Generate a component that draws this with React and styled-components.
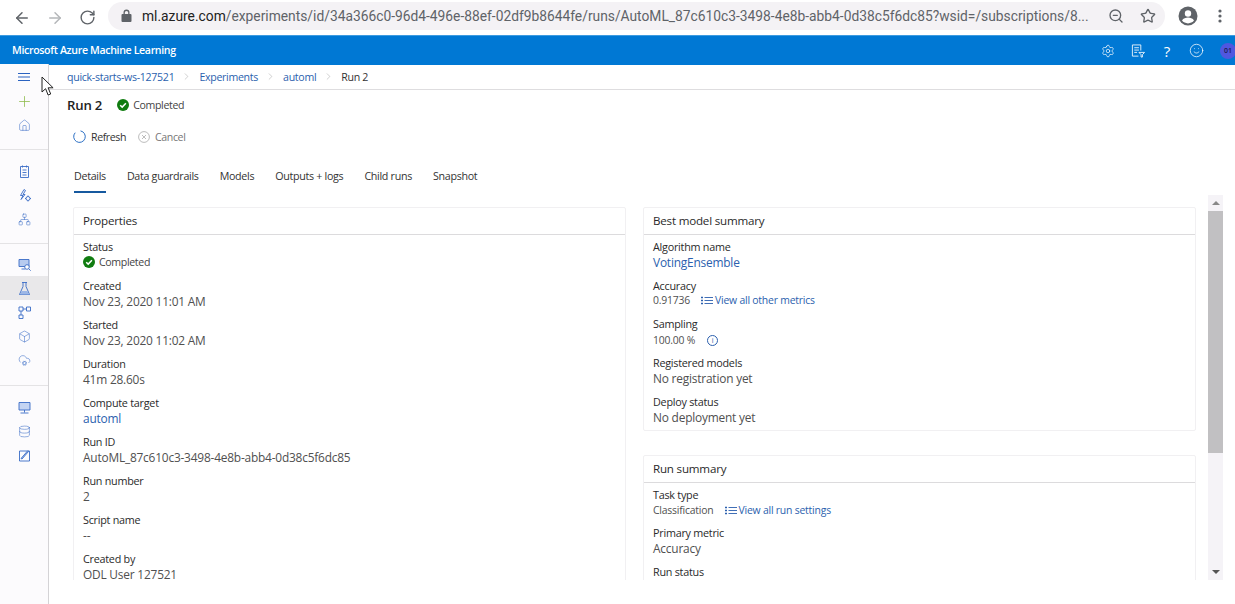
import React from 'react';
import styled, { createGlobalStyle } from 'styled-components';
import {
  ArrowLeft, ArrowRight, RotateCw, Star, Settings, Smile, Home, Network, Box, CloudCog, Database,
  Plus, ChevronRight, ZoomOut,
} from 'lucide-react';

const GlobalStyle = createGlobalStyle`
  html, body {
    margin: 0;
    height: 100%;
    overflow: hidden;
    background: #fff;
  }
  body {
    font-family: "Open Sans", "Noto Sans", "Liberation Sans", sans-serif;
    color: #222;
  }
`;

const Page = styled.div`
  position: relative;
  width: 1235px;
  height: 604px;
  display: flex;
  flex-direction: column;
  overflow: hidden;
`;

const BrowserBar = styled.div`
  height: 35px;
  display: flex;
  align-items: center;
  background: #fff;
  flex: none;
`;

const NavButtons = styled.div`
  display: flex;
  align-items: center;
  gap: 15px;
  padding-left: 13px;
  width: 108px;
  box-sizing: border-box;
  flex: none;
  color: #5f6368;
`;

const Omnibox = styled.div`
  width: 1057px;
  height: 28px;
  margin-top: -3px;
  border-radius: 14px;
  background: #f4f2f5;
  display: flex;
  align-items: center;
  padding: 0 9px 0 13px;
  box-sizing: border-box;
  font-family: "Roboto", sans-serif;
  font-size: 13.8px;
  color: #5f6368;
  white-space: nowrap;
  flex: none;
  strong {
    font-weight: 400;
    color: #222;
  }
  svg {
    flex: none;
  }
`;

const UrlText = styled.span`
  margin-left: 10px;
  flex: 1;
  min-width: 0;
  overflow: hidden;
`;

const OmniIcons = styled.div`
  display: flex;
  align-items: center;
  gap: 16px;
  flex: none;
  color: #5f6368;
`;

const BrowserRight = styled.div`
  display: flex;
  align-items: center;
  color: #5f6368;
  margin-left: 13px;
  gap: 20px;
  margin-top: -3px;
`;

const AzureBar = styled.header`
  height: 30px;
  flex: none;
  background: #0078d4;
  display: flex;
  align-items: center;
  justify-content: space-between;
  color: #fff;
  border-top: 1px solid #3d9be0;
  box-sizing: border-box;
`;

const Brand = styled.div`
  font-size: 10.6px;
  font-weight: 600;
  padding: 0 0 2px 12px;
  letter-spacing: -0.35px;
`;

const AzureIcons = styled.div`
  display: flex;
  align-items: center;
  gap: 16px;
  margin-right: -1px;
`;

const HelpMark = styled.span`
  width: 12px;
  text-align: center;
  font-size: 15px;
  line-height: 16px;
`;

const Avatar = styled.div`
  width: 16px;
  height: 16px;
  border-radius: 50%;
  background: #4f57e0;
  color: #1b1b50;
  font-size: 7px;
  font-weight: 600;
  display: flex;
  align-items: center;
  padding-left: 4px;
  box-sizing: border-box;
`;

const Body = styled.div`
  flex: 1;
  display: flex;
  min-height: 0;
`;

const Sidebar = styled.nav`
  width: 49px;
  flex: none;
  box-sizing: border-box;
  background: #fcfbfd;
  border-right: 1px solid #d4d3d6;
  margin-top: -1px;
`;

const NavGroup = styled.div`
  padding: ${(p) => p.$top}px 0 ${(p) => p.$bottom}px;
  border-bottom: ${(p) => (p.$last ? 'none' : '1px solid #e4e3e5')};
`;

const NavItem = styled.div`
  height: 24px;
  display: flex;
  align-items: center;
  justify-content: center;
  color: ${(p) => p.$color || '#3a6cc6'};
  background: ${(p) => (p.$active ? '#e9e8ea' : 'transparent')};
`;

const Main = styled.main`
  flex: 1;
  min-width: 0;
  display: flex;
  flex-direction: column;
`;

const Breadcrumbs = styled.div`
  height: 25px;
  box-sizing: border-box;
  flex: none;
  border-bottom: 1px solid #dedddf;
  display: flex;
  align-items: center;
  padding: 0 0 1px 18px;
  font-size: 10.6px;
  letter-spacing: -0.3px;
  color: #333;
`;

const Crumb = styled.span`
  color: #2b5fae;
`;

const CrumbSep = styled.span`
  display: flex;
  color: #999;
  margin: 0 7px;
`;

const TitleRow = styled.div`
  height: 32px;
  flex: none;
  display: flex;
  align-items: center;
  padding: 0 0 2px 18px;
  box-sizing: border-box;
`;

const Title = styled.h1`
  margin: 0 15px 0 0;
  font-size: 13.2px;
  font-weight: 600;
  color: #222;
  letter-spacing: -0.2px;
`;

const StatusText = styled.div`
  display: flex;
  align-items: center;
  gap: 4px;
  margin-top: ${(p) => p.$drop || 0}px;
  font-size: 10.6px;
  letter-spacing: -0.35px;
  color: #444;
`;

const CommandBar = styled.div`
  height: 30px;
  flex: none;
  display: flex;
  align-items: center;
  padding: 0 0 1px 24px;
  box-sizing: border-box;
  font-size: 10.6px;
  letter-spacing: -0.4px;
`;

const Command = styled.div`
  display: flex;
  align-items: center;
  gap: 5px;
  margin-right: 12px;
  color: ${(p) => (p.$disabled ? '#777' : '#333')};
`;

const Tabs = styled.div`
  height: 36px;
  margin-top: 5px;
  flex: none;
  display: flex;
  gap: 21px;
  padding-left: 25px;
  font-size: 10.7px;
  letter-spacing: -0.3px;
`;

const Tab = styled.div`
  height: 100%;
  box-sizing: border-box;
  padding-top: 12px;
  color: #333;
  border-bottom: 2px solid ${(p) => (p.$active ? '#16599f' : 'transparent')};
`;

const ContentRow = styled.div`
  display: flex;
  height: 385px;
  margin-top: 2px;
  flex: none;
`;

const Columns = styled.div`
  width: 1159px;
  flex: none;
  overflow: hidden;
  padding: 12px 0 0 24px;
  box-sizing: border-box;
  display: grid;
  grid-template-columns: 553px 553px;
  column-gap: 17px;
  align-items: start;
`;

const Column = styled.div`
  display: flex;
  flex-direction: column;
  gap: 24px;
`;

const Card = styled.section`
  border: 1px solid #f1f0f2;
  border-radius: 2px;
  padding-bottom: 1px;
`;

const CardTitle = styled.h2`
  margin: 0;
  height: 27px;
  box-sizing: border-box;
  border-bottom: 1px solid #dcdbdd;
  padding: 5px 0 0 9px;
  font-size: 11.6px;
  font-weight: 500;
  letter-spacing: -0.2px;
  color: #2a2a2a;
`;

const Field = styled.div`
  height: ${(p) => (p.$compact ? 38 : 39)}px;
  box-sizing: border-box;
  padding: 4px 0 0 9px;
`;

const Label = styled.div`
  font-size: 10.8px;
  line-height: 15px;
  letter-spacing: -0.25px;
  color: #2a2a2a;
`;

const Value = styled.div`
  font-size: 11.9px;
  line-height: 16px;
  letter-spacing: -0.2px;
  color: ${(p) => (p.$link ? '#2b5fae' : '#505050')};
`;

const SmallValue = styled.div`
  display: flex;
  align-items: center;
  margin-top: ${(p) => p.$drop || 0}px;
  font-size: 10.4px;
  line-height: 15px;
  letter-spacing: -0.2px;
  color: #505050;
`;

const MetricLink = styled.span`
  display: inline-flex;
  align-items: center;
  gap: 2px;
  margin-left: 11px;
  color: #2b5fae;
`;

const InfoDot = styled.span`
  width: 9px;
  height: 9px;
  margin-left: 12px;
  border: 1px solid #2b5fae;
  border-radius: 50%;
  color: #2b5fae;
  font-size: 7px;
  line-height: 9px;
  text-align: center;
`;

const Scrollbar = styled.div`
  width: 15px;
  flex: none;
  background: #f5f3f7;
  display: flex;
  flex-direction: column;
  align-items: center;
`;

const ScrollArrow = styled.div`
  height: 16px;
  flex: none;
  display: flex;
  align-items: center;
  justify-content: center;
  &::before {
    content: '';
    border-left: 4px solid transparent;
    border-right: 4px solid transparent;
    ${(p) => (p.$down ? 'border-top: 4px solid #555;' : 'border-bottom: 4px solid #888;')}
  }
`;

const ScrollThumb = styled.div`
  width: 100%;
  height: 242px;
  flex: none;
  background: #c1c0c2;
`;

const ScrollSpace = styled.div`
  flex: 1;
`;

const Pointer = styled.svg`
  position: absolute;
  left: 41px;
  top: 76px;
`;

const CheckBadge = ({ size = 12 }) => (
  <svg width={size} height={size} viewBox="0 0 12 12">
    <circle cx="6" cy="6" r="6" fill="#107c10" />
    <path d="M3.2 6.2 5.2 8.1 8.9 4.2" fill="none" stroke="#fff" strokeWidth="1.5" />
  </svg>
);

const ListGlyph = () => (
  <svg width="12" height="9" viewBox="0 0 12 9" fill="none" stroke="#2b5fae">
    <path d="M0 1.5h2M0 4.5h2M0 7.5h2" strokeWidth="1.4" />
    <path d="M3.5 1.5H12M3.5 4.5H12M3.5 7.5H12" strokeWidth="0.9" />
  </svg>
);

const LockIcon = () => (
  <svg width="11" height="14" viewBox="0 0 11 14">
    <path d="M2.5 5V3.6a3 3 0 0 1 6 0V5h1a1 1 0 0 1 1 1v6a1 1 0 0 1-1 1h-8a1 1 0 0 1-1-1V6a1 1 0 0 1 1-1zM3.8 5h3.4V3.6a1.7 1.7 0 0 0-3.4 0z" fill="#5f6368" />
  </svg>
);

const AccountIcon = () => (
  <svg width="20" height="20" viewBox="0 0 20 20">
    <circle cx="10" cy="10" r="9.5" fill="#5f6368" />
    <circle cx="10" cy="7.5" r="3.2" fill="#fff" />
    <path d="M4 14.4c1.2-2 3.8-2.8 6-2.8s4.8.8 6 2.8A7.5 7.5 0 0 1 4 14.4z" fill="#fff" />
  </svg>
);

const KebabIcon = () => (
  <svg width="4" height="14" viewBox="0 0 4 14" fill="#5f6368">
    <circle cx="2" cy="2" r="1.6" />
    <circle cx="2" cy="7" r="1.6" />
    <circle cx="2" cy="12" r="1.6" />
  </svg>
);

// small line icons of the side rail, drawn on a 13px grid
const RailIcon = ({ children }) => (
  <svg width="13" height="13" viewBox="0 0 13 13" fill="none" stroke="currentColor" strokeWidth="0.9">
    {children}
  </svg>
);

const HamburgerIcon = () => (
  <svg width="12" height="8" viewBox="0 0 12 8" fill="none" stroke="#2a62c0" strokeWidth="1">
    <path d="M0 .5h12M0 4h12M0 7.500h12" />
  </svg>
);

const NotesIcon = () => (
  <RailIcon>
    <path d="M2.5 1.500h8v11h-8zM4.500.5v2M8.500.5v2M4.500 5h4M4.500 7.500h4M4.500 10h4" />
  </RailIcon>
);

const AutomlIcon = () => (
  <RailIcon>
    <path d="M6 .5 2.500 6.500h2.500l-2 4 4-5H5l2.500-4z" />
    <circle cx="10" cy="9.500" r="2" />
    <path d="M10 6.500v1M10 11.500v1M7 9.500h1M12 9.500h1" />
  </RailIcon>
);

const ComputeSearchIcon = () => (
  <RailIcon>
    <path d="M1 1.500h10v7H1zM3.500 11h4" fill="#b7cbef" />
    <circle cx="9" cy="9" r="2.300" fill="#fff" />
    <path d="m10.700 10.700 2 2" />
  </RailIcon>
);

const FlaskIcon = () => (
  <RailIcon>
    <path d="M4 .5h5M5 .5v4L1.500 12.500h10L8 4.500v-4" />
    <path d="M3.500 9h6l1.500 3.500H2z" fill="#9db7e6" stroke="none" />
  </RailIcon>
);

const PipelineIcon = () => (
  <RailIcon>
    <path d="M1 1h4v4H1zM8.500 1h4v4h-4zM1 9h4v3.500H1zM5 3h3.500M3 5v4" />
  </RailIcon>
);

const ScreenIcon = () => (
  <RailIcon>
    <path d="M1 1.500h11v7.500H1z" fill="#c4d4f2" />
    <path d="M6.500 9v2.500M2.500 12h8" />
  </RailIcon>
);

const SlashNoteIcon = () => (
  <RailIcon>
    <path d="M1.500 2h10v10h-10z" />
    <path d="M4 10l6.500-7.500v-.5h-1L3 9.500z" fill="#b7cbef" />
  </RailIcon>
);

const FeedbackListIcon = () => (
  <svg width="14" height="14" viewBox="0 0 15 14" fill="none" stroke="currentColor" strokeWidth="0.9">
    <path d="M8 12.500H1.500v-12h9v6M3.500 3.500h5M3.500 6h5M3.500 8.500h3" />
    <path d="M8.500 8.500h6l-2.300 2.500v2.500h-1.400V11z" />
  </svg>
);

const railIcon = { size: 13, strokeWidth: 1 };

const navGroups = [
  { id: 'top', top: 1, bottom: 12, items: [
    { key: 'menu', icon: <HamburgerIcon /> },
    { key: 'new', icon: <Plus size={17} strokeWidth={1.1} />, color: '#8dbb4a' },
    { key: 'home', icon: <Home {...railIcon} /> },
  ] },
  { id: 'author', top: 9, bottom: 12, items: [
    { key: 'notes', icon: <NotesIcon /> },
    { key: 'automl', icon: <AutomlIcon /> },
    { key: 'designer', icon: <Network {...railIcon} /> },
  ] },
  { id: 'assets', top: 8, bottom: 13, items: [
    { key: 'datasets', icon: <ComputeSearchIcon /> },
    { key: 'experiments', icon: <FlaskIcon />, active: true },
    { key: 'pipelines', icon: <PipelineIcon /> },
    { key: 'models', icon: <Box {...railIcon} /> },
    { key: 'endpoints', icon: <CloudCog {...railIcon} /> },
  ] },
  { id: 'manage', top: 9, bottom: 0, last: true, items: [
    { key: 'compute', icon: <ScreenIcon /> },
    { key: 'datastores', icon: <Database {...railIcon} /> },
    { key: 'labeling', icon: <SlashNoteIcon /> },
  ] },
];

const properties = [
  { label: 'Created', value: 'Nov 23, 2020 11:01 AM' },
  { label: 'Started', value: 'Nov 23, 2020 11:02 AM' },
  { label: 'Duration', value: '41m 28.60s' },
  { label: 'Compute target', value: 'automl', link: true },
  { label: 'Run ID', value: 'AutoML_87c610c3-3498-4e8b-abb4-0d38c5f6dc85' },
  { label: 'Run number', value: '2' },
  { label: 'Script name', value: '--' },
  { label: 'Created by', value: 'ODL User 127521' },
];

const tabs = ['Details', 'Data guardrails', 'Models', 'Outputs + logs', 'Child runs', 'Snapshot'];

export default function App() {
  return (
    <Page>
      <GlobalStyle />
      <BrowserBar>
        <NavButtons>
          <ArrowLeft size={18} strokeWidth={2} />
          <ArrowRight size={18} strokeWidth={2} color="#b4b6b9" />
          <RotateCw size={17} strokeWidth={2} />
        </NavButtons>
        <Omnibox>
          <LockIcon />
          <UrlText>
            <strong>ml.azure.com</strong>/experiments/id/34a366c0-96d4-496e-88ef-02df9b8644fe/runs/AutoML_87c610c3-3498-4e8b-abb4-0d38c5f6dc85?wsid=/subscriptions/8...
          </UrlText>
          <OmniIcons>
            <ZoomOut size={16} strokeWidth={2} />
            <Star size={16} strokeWidth={2} />
          </OmniIcons>
        </Omnibox>
        <BrowserRight>
          <AccountIcon />
          <KebabIcon />
        </BrowserRight>
      </BrowserBar>

      <AzureBar>
        <Brand>Microsoft Azure Machine Learning</Brand>
        <AzureIcons>
          <Settings size={14} strokeWidth={1.2} />
          <FeedbackListIcon />
          <HelpMark>?</HelpMark>
          <Smile size={15} strokeWidth={1.2} />
          <Avatar>01</Avatar>
        </AzureIcons>
      </AzureBar>

      <Body>
        <Sidebar>
          {navGroups.map((group) => (
            <NavGroup key={group.id} $top={group.top} $bottom={group.bottom} $last={group.last}>
              {group.items.map((item) => (
                <NavItem key={item.key} $color={item.color} $active={item.active}>{item.icon}</NavItem>
              ))}
            </NavGroup>
          ))}
        </Sidebar>

        <Main>
          <Breadcrumbs>
            <Crumb>quick-starts-ws-127521</Crumb>
            <CrumbSep><ChevronRight size={11} strokeWidth={1} /></CrumbSep>
            <Crumb>Experiments</Crumb>
            <CrumbSep><ChevronRight size={11} strokeWidth={1} /></CrumbSep>
            <Crumb>automl</Crumb>
            <CrumbSep><ChevronRight size={11} strokeWidth={1} /></CrumbSep>
            <span>Run 2</span>
          </Breadcrumbs>

          <TitleRow>
            <Title>Run 2</Title>
            <StatusText><CheckBadge />Completed</StatusText>
          </TitleRow>

          <CommandBar>
            <Command>
              <svg width="13" height="13" viewBox="0 0 13 13" fill="none" stroke="#2b6fc4" strokeWidth="1">
                <path d="M7.5.9A5.8 5.8 0 1 1 2.200 2.700" />
              </svg>
              Refresh
            </Command>
            <Command $disabled>
              <svg width="12" height="12" viewBox="0 0 12 12" fill="none" stroke="#b5b5b5" strokeWidth="0.9">
                <circle cx="6" cy="6" r="5.4" />
                <path d="M4 4l4 4M8 4l-4 4" />
              </svg>
              Cancel
            </Command>
          </CommandBar>

          <Tabs>
            {tabs.map((tab) => (
              <Tab key={tab} $active={tab === 'Details'}>{tab}</Tab>
            ))}
          </Tabs>

          <ContentRow>
            <Columns>
              <Column>
                <Card>
                  <CardTitle>Properties</CardTitle>
                  <Field>
                    <Label>Status</Label>
                    <StatusText $drop={1}><CheckBadge />Completed</StatusText>
                  </Field>
                  {properties.map((p) => (
                    <Field key={p.label}>
                      <Label>{p.label}</Label>
                      <Value $link={p.link}>{p.value}</Value>
                    </Field>
                  ))}
                </Card>
              </Column>
              <Column>
                <Card>
                  <CardTitle>Best model summary</CardTitle>
                  <Field>
                    <Label>Algorithm name</Label>
                    <Value $link>VotingEnsemble</Value>
                  </Field>
                  <Field $compact>
                    <Label>Accuracy</Label>
                    <SmallValue>
                      0.91736
                      <MetricLink><ListGlyph />View all other metrics</MetricLink>
                    </SmallValue>
                  </Field>
                  <Field>
                    <Label>Sampling</Label>
                    <SmallValue $drop={2}>100.00 %<InfoDot>i</InfoDot></SmallValue>
                  </Field>
                  <Field>
                    <Label>Registered models</Label>
                    <Value>No registration yet</Value>
                  </Field>
                  <Field>
                    <Label>Deploy status</Label>
                    <Value>No deployment yet</Value>
                  </Field>
                </Card>
                <Card>
                  <CardTitle>Run summary</CardTitle>
                  <Field $compact>
                    <Label>Task type</Label>
                    <SmallValue $drop={1}>
                      Classification
                      <MetricLink><ListGlyph />View all run settings</MetricLink>
                    </SmallValue>
                  </Field>
                  <Field>
                    <Label>Primary metric</Label>
                    <Value>Accuracy</Value>
                  </Field>
                  <Field>
                    <Label>Run status</Label>
                  </Field>
                </Card>
              </Column>
            </Columns>
            <Scrollbar>
              <ScrollArrow />
              <ScrollThumb />
              <ScrollSpace />
              <ScrollArrow $down />
            </Scrollbar>
          </ContentRow>
        </Main>
      </Body>

      <Pointer width="14" height="21" viewBox="0 0 14 21">
        <path d="M1 1v15l3.600-3.300 2.500 6.300 2.600-1-2.600-6.200h5z" fill="#fff" stroke="#222" strokeWidth="1" />
      </Pointer>
    </Page>
  );
}
